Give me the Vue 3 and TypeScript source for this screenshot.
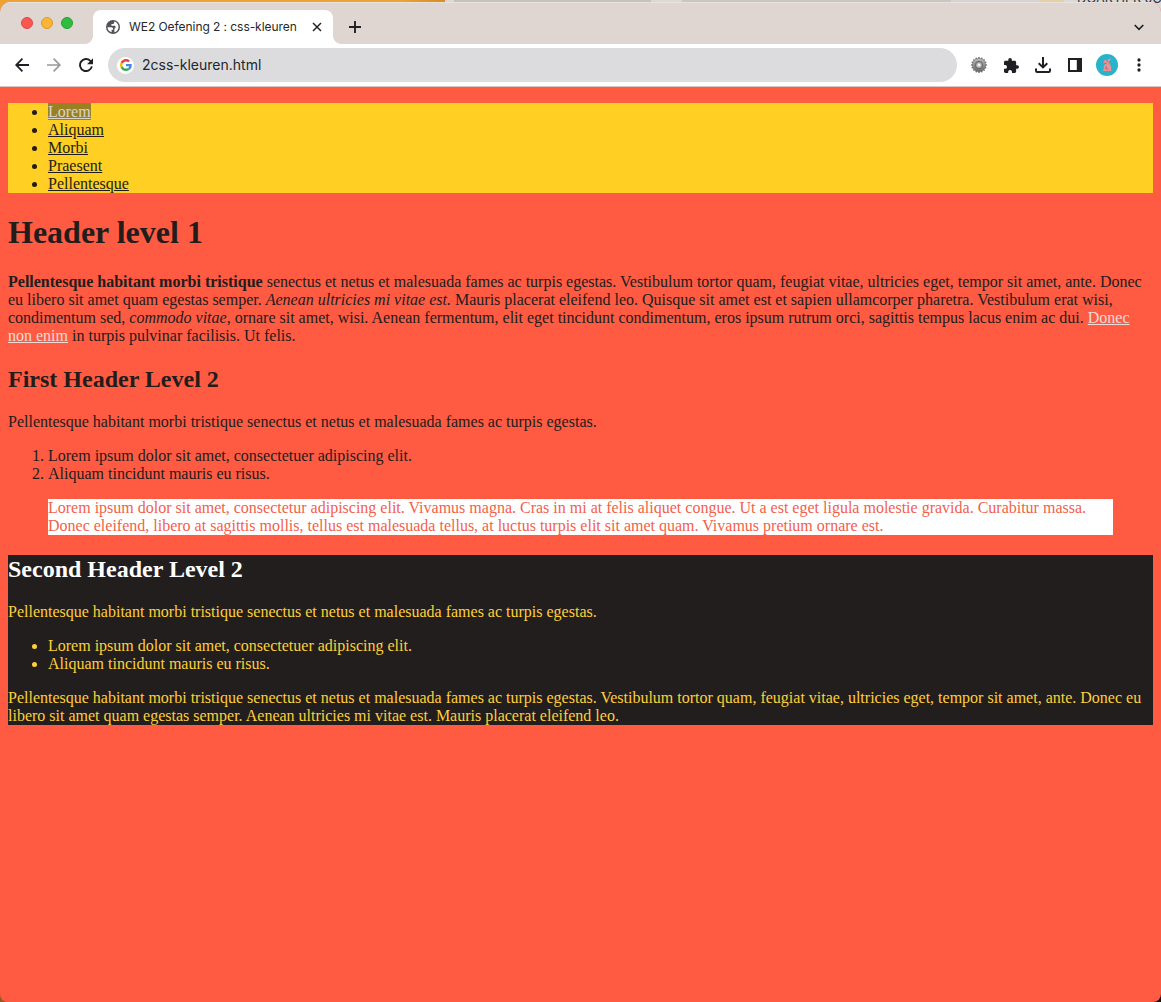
<script setup lang="ts">
const navItems: string[] = ['Lorem', 'Aliquam', 'Morbi', 'Praesent', 'Pellentesque']
const listItems: string[] = [
  'Lorem ipsum dolor sit amet, consectetuer adipiscing elit.',
  'Aliquam tincidunt mauris eu risus.',
]
const intro = 'Pellentesque habitant morbi tristique senectus et netus et malesuada fames ac turpis egestas.'
const gearTeeth: number[] = Array.from({ length: 8 }, (_, i) => i * 22.5)
</script>

<template>
  <div class="desktop">
    <div class="behind"><span class="behind-label">DOARTIER JC</span></div>
    <div class="window">
      <header class="tabbar">
        <div class="lights"><i class="red"></i><i class="amber"></i><i class="green"></i></div>
        <div class="tab">
          <svg class="globe" width="14" height="14" viewBox="0 0 14 14">
            <circle cx="7" cy="7" r="7" fill="#505357" />
            <path d="M1.500 7.200h3.600c1.400 0 2 .8 2 1.700v.8H5.600v2.500C3.200 11.700 1.500 9.800 1.500 7.200z" fill="#fff" />
            <path d="M8.200 1.600v1c0 .9-.6 1.500-1.500 1.500H5.400v1.700h2.900c.9 0 1.300.6 1.300 1.300v.9h2.800C12.900 4.800 11 2.200 8.200 1.600z" fill="#fff" />
            <path d="M9.600 7.800l-1.200 1v3.500c2.200-.5 3.800-2.200 4-4.500z" fill="#fff" />
          </svg>
          <span class="tab-title">WE2 Oefening 2 : css-kleuren</span>
          <svg class="close" width="10" height="10" viewBox="0 0 10 10"><path d="M1 1l8 8M9 1L1 9" stroke="#222427" stroke-width="1.500" /></svg>
        </div>
        <svg class="plus" width="12" height="12" viewBox="0 0 12 12"><path d="M6 0v12M0 6h12" stroke="#202124" stroke-width="1.900" /></svg>
        <svg class="chevron" width="10" height="7" viewBox="0 0 10 7"><path d="M.7 1l4.300 4.300L9.300 1" fill="none" stroke="#202124" stroke-width="1.700" /></svg>
      </header>

      <div class="toolbar">
        <svg class="back" width="14" height="14" viewBox="0 0 14 14"><path d="M14 7H1.500M7.400.7L1.200 7l6.200 6.300" fill="none" stroke="#1f2023" stroke-width="1.800" /></svg>
        <svg class="forward" width="14" height="14" viewBox="0 0 14 14"><path d="M0 7h12.500M6.600.7L12.800 7l-6.200 6.300" fill="none" stroke="#98999b" stroke-width="1.700" /></svg>
        <svg class="reload" width="14" height="14" viewBox="0 0 14 14">
          <path d="M12.900 8.400A6 6 0 1 1 11.300 2.800L13 4.500" fill="none" stroke="#1f2023" stroke-width="1.900" />
          <path d="M14 .2v6H8z" fill="#1f2023" />
        </svg>
        <div class="address">
          <span class="site">
            <svg width="12" height="12" viewBox="0 0 48 48">
              <path fill="#EA4335" d="M24 9.500c3.540 0 6.710 1.220 9.210 3.600l6.850-6.850C35.900 2.380 30.470 0 24 0 14.620 0 6.510 5.380 2.560 13.220l7.980 6.190C12.430 13.720 17.740 9.500 24 9.500z" />
              <path fill="#4285F4" d="M46.980 24.550c0-1.570-.15-3.090-.38-4.550H24v9.020h12.940c-.58 2.960-2.260 5.480-4.780 7.180l7.730 6c4.510-4.180 7.090-10.360 7.090-17.650z" />
              <path fill="#FBBC05" d="M10.530 28.590A14.500 14.500 0 0 1 9.770 24c0-1.600.27-3.140.76-4.590l-7.980-6.190A24 24 0 0 0 0 24c0 3.880.92 7.540 2.560 10.780z" />
              <path fill="#34A853" d="M24 48c6.480 0 11.930-2.130 15.890-5.810l-7.730-6c-2.150 1.450-4.920 2.300-8.160 2.300-6.260 0-11.570-4.220-13.470-9.910l-7.980 6.190C6.510 42.620 14.620 48 24 48z" />
            </svg>
          </span>
          <span class="url">2css-kleuren.html</span>
        </div>

        <svg class="gear" width="16" height="16" viewBox="0 0 16 16">
          <defs>
            <linearGradient id="metal" x1="0" y1="0" x2="0" y2="1"><stop offset="0" stop-color="#bcbcbc" /><stop offset="1" stop-color="#686868" /></linearGradient>
          </defs>
          <g fill="#77787a"><rect v-for="a in gearTeeth" :key="a" x="7.200" y="0" width="1.600" height="16" rx=".5" :transform="`rotate(${a} 8 8)`" /></g>
          <circle cx="8" cy="8" r="6.700" fill="url(#metal)" stroke="#6b6b6b" stroke-width=".5" />
          <circle cx="8" cy="8" r="3.700" fill="#8a8a8a" stroke="#5c5c5c" stroke-width=".7" />
          <circle cx="8" cy="8" r="2.600" fill="#bdbdbd" />
          <circle cx="8" cy="8" r="1.300" fill="#f6f6f6" />
        </svg>
        <svg class="puzzle" width="15" height="15" viewBox="2 1 21 21"><path fill="#1f2023" d="M20.500 11H19V7c0-1.100-.9-2-2-2h-4V3.500a2.500 2.500 0 0 0-5 0V5H4c-1.100 0-2 .9-2 2v3.800h1.500a2.700 2.700 0 0 1 0 5.400H2V20c0 1.100.9 2 2 2h3.800v-1.500a2.700 2.700 0 0 1 5.400 0V22H17c1.100 0 2-.9 2-2v-4h1.500a2.500 2.500 0 0 0 0-5z" /></svg>
        <svg class="download" width="16" height="16" viewBox="0 0 16 16"><path d="M8 0v10M3.700 6.200L8 10.400l4.300-4.200M1 11.400v2.400q0 1.200 1.200 1.200h11.600q1.200 0 1.200-1.200v-2.400" fill="none" stroke="#1f2023" stroke-width="2" /></svg>
        <svg class="panel" width="14" height="14" viewBox="0 0 14 14"><path fill="#1f2023" fill-rule="evenodd" d="M0 0h14v14H0zM2 2v10h6.800V2z" /></svg>
        <svg class="avatar" width="22" height="22" viewBox="0 0 22 22">
          <circle cx="11" cy="11" r="11" fill="#27b4ca" />
          <path d="M7.400 6.600c1.300-.9 2.700-.6 3.700.2.600-1.500 2.200-2.500 3.800-2.300.5.600-.8 1.200-1.600 2.400-.5.700-.4 1.500-.2 2.300 1.700 1.800 2.500 4.300 1.800 6.700l.8 1.200H7.400l-.9-.7 1.300-.8c-.5-2.200 0-4.300 1.500-5.700-1.200-.1-2-.8-1.800-1.700l1.100-.6z" fill="#ec9296" />
          <path d="M10.600 7.100l1.700 1.300M8.300 9.300l2.300.4M10.400 12.200l-.6 2.300 2.200.8" fill="none" stroke="#965f6c" stroke-width=".8" />
        </svg>
        <svg class="dots" width="4" height="14" viewBox="0 0 4 14" fill="#1f2023"><circle cx="2" cy="2" r="1.650" /><circle cx="2" cy="7" r="1.650" /><circle cx="2" cy="12" r="1.650" /></svg>
      </div>

      <main class="page">
        <ul class="nav">
          <li v-for="(item, i) in navItems" :key="item"><a href="#" :class="{ active: i === 0 }">{{ item }}</a></li>
        </ul>
        <h1>Header level 1</h1>
        <p>
          <strong>Pellentesque habitant morbi tristique</strong> senectus et netus et malesuada fames ac turpis egestas. Vestibulum tortor quam, feugiat vitae, ultricies eget, tempor sit amet, ante. Donec<br />
          eu libero sit amet quam egestas semper. <em>Aenean ultricies mi vitae est.</em> Mauris placerat eleifend leo. Quisque sit amet est et sapien ullamcorper pharetra. Vestibulum erat wisi,<br />
          condimentum sed, <em>commodo vitae</em>, ornare sit amet, wisi. Aenean fermentum, elit eget tincidunt condimentum, eros ipsum rutrum orci, sagittis tempus lacus enim ac dui. <a class="light" href="#">Donec<br />non enim</a> in turpis pulvinar facilisis. Ut felis.
        </p>
        <h2>First Header Level 2</h2>
        <p>{{ intro }}</p>
        <ol>
          <li v-for="item in listItems" :key="item">{{ item }}</li>
        </ol>
        <blockquote>
          Lorem ipsum dolor sit amet, consectetur adipiscing elit. Vivamus magna. Cras in mi at felis aliquet congue. Ut a est eget ligula molestie gravida. Curabitur massa.<br />
          Donec eleifend, libero at sagittis mollis, tellus est malesuada tellus, at luctus turpis elit sit amet quam. Vivamus pretium ornare est.
        </blockquote>
        <section class="dark">
          <h2>Second Header Level 2</h2>
          <p>{{ intro }}</p>
          <ul>
            <li v-for="item in listItems" :key="item">{{ item }}</li>
          </ul>
          <p>
            {{ intro }} Vestibulum tortor quam, feugiat vitae, ultricies eget, tempor sit amet, ante. Donec eu<br />
            libero sit amet quam egestas semper. Aenean ultricies mi vitae est. Mauris placerat eleifend leo.
          </p>
        </section>
      </main>
    </div>
  </div>
</template>

<style>
html,
body {
  overflow: hidden;
}
</style>

<style scoped>
.desktop {
  position: relative;
  box-sizing: border-box;
  width: 1161px;
  height: 1002px;
  padding-top: 2px;
  overflow: hidden;
  background: linear-gradient(90deg, #9c5927 50%, #17120f 50%);
}
.behind {
  position: absolute;
  inset: 0 0 auto 0;
  height: 14px;
  overflow: hidden;
  background: linear-gradient(90deg, #eda235 0 400px, #d88b26 445px, #dcd8d3 445px 454px, #c6c2bc 454px 651px, #dcd9d4 651px 682px, #c9c6c1 682px 951px, #d5d4d2 951px 1040px, #e6d0a8 1040px 1064px, #d9d9d8 1064px);
}
.behind-label {
  position: absolute;
  left: 1077px;
  top: -9px;
  font: 13px/14px Inter, sans-serif;
  color: #333;
  white-space: nowrap;
}
.window {
  position: relative;
  display: flex;
  flex-direction: column;
  height: 1000px;
  border-radius: 10px 10px 8px 8px;
  overflow: hidden;
  background: #ff5b43;
}
.tabbar {
  display: flex;
  align-items: center;
  box-sizing: border-box;
  height: 42px;
  background: #dfd6d1;
  border-top: 1px solid #e8e2de;
}
.lights {
  display: flex;
  gap: 8px;
  margin: -1px 20px 0 21px;
}
.lights i {
  box-sizing: border-box;
  width: 12px;
  height: 12px;
  border-radius: 50%;
}
.red { background: #fc5650; border: 1px solid #df4743; }
.amber { background: #fbb434; border: 1px solid #dc9a2e; }
.green { background: #2ebd3e; border: 1px solid #25a033; }
.tab {
  position: relative;
  display: flex;
  align-items: center;
  align-self: flex-end;
  box-sizing: border-box;
  width: 240px;
  height: 34px;
  padding: 0 11px 0 13px;
  border-radius: 8px 8px 0 0;
  background: #fff;
}
.tab::before,
.tab::after {
  content: '';
  position: absolute;
  bottom: 0;
  width: 8px;
  height: 8px;
}
.tab::before {
  left: -8px;
  background: radial-gradient(circle at 0 0, transparent 7.500px, #fff 8.200px);
}
.tab::after {
  right: -8px;
  background: radial-gradient(circle at 100% 0, transparent 7.500px, #fff 8.200px);
}
.tab-title {
  flex: 1;
  margin-left: 9px;
  font: 12px/16px Inter, sans-serif;
  letter-spacing: -0.06px;
  color: #26282b;
  white-space: nowrap;
}
.plus { margin: 7px 0 0 16px; }
.chevron { margin: 8px 17px 0 auto; }
.toolbar {
  display: flex;
  align-items: center;
  flex: none;
  box-sizing: border-box;
  height: 43px;
  padding-left: 15px;
  background: #fff;
  border-bottom: 1px solid #dcc6c2;
}
.forward { margin-left: 18px; }
.reload { margin-left: 18px; }
.address {
  display: flex;
  align-items: center;
  box-sizing: border-box;
  width: 849px;
  height: 34px;
  margin-left: 15px;
  padding-left: 9px;
  border-radius: 17px;
  background: #dcdcdf;
}
.site {
  display: flex;
  align-items: center;
  justify-content: center;
  width: 17px;
  height: 17px;
  border-radius: 50%;
  background: #fff;
}
.url {
  margin-left: 8px;
  font: 14px/20px Inter, sans-serif;
  color: #242629;
}
.gear { margin-left: 14px; }
.puzzle { margin-left: 17px; }
.download { margin-left: 16px; }
.panel { margin-left: 17px; }
.avatar { margin-left: 14px; }
.dots { margin-left: 19px; }
.page {
  flex: 1;
  padding: 16px 8px 0;
  font: 16px/18px 'Liberation Serif', serif;
  color: #221d1b;
  white-space: nowrap;
}
.page p,
.page ul,
.page ol {
  margin: 16px 0;
}
.page ul,
.page ol {
  padding-left: 40px;
}
.page .nav {
  margin: 0;
  background: #ffcf24;
}
.page a {
  color: inherit;
}
.page a.active {
  color: #d9d5c9;
  background: #998023;
}
.page a.light {
  color: #eedbd6;
}
h1 {
  margin: 21px 0 22px;
  font-size: 32px;
  line-height: 37px;
}
h2 {
  margin: 20px 0;
  font-size: 24px;
  line-height: 28px;
}
blockquote {
  margin: 16px 40px;
  background: #fff;
  color: #f25f4b;
}
.dark {
  margin-top: 20px;
  background: #211e1d;
  color: #ffcf3b;
}
.dark h2 {
  margin-top: 0;
  color: #fff;
}
.page .dark p:last-child {
  margin-bottom: 0;
}
</style>
